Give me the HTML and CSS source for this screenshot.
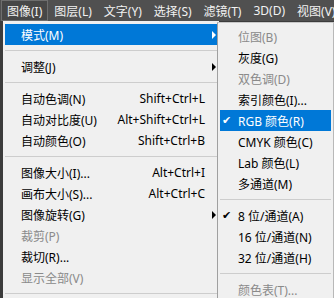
FILE: index.html
```html
<!DOCTYPE html>
<html lang="zh-CN">
<head>
  <meta charset="UTF-8">
  <title>图像菜单</title>
  <link rel="stylesheet" href="styles.css">
</head>
<body>

  <div class="menubar">
    <span class="bar-item active">图像(I)</span>
    <span class="bar-item">图层(L)</span>
    <span class="bar-item">文字(Y)</span>
    <span class="bar-item">选择(S)</span>
    <span class="bar-item">滤镜(T)</span>
    <span class="bar-item">3D(D)</span>
    <span class="bar-item">视图(V)</span>
  </div>

  <div class="stage">
    <ul class="menu main-menu">
      <li class="item hl">模式(M)<span class="arrow"></span></li>
      <li class="sep"></li>
      <li class="item">调整(J)<span class="arrow"></span></li>
      <li class="sep"></li>
      <li class="item">自动色调(N)<span class="key">Shift+Ctrl+L</span></li>
      <li class="item">自动对比度(U)<span class="key">Alt+Shift+Ctrl+L</span></li>
      <li class="item">自动颜色(O)<span class="key">Shift+Ctrl+B</span></li>
      <li class="sep"></li>
      <li class="item">图像大小(I)...<span class="key">Alt+Ctrl+I</span></li>
      <li class="item">画布大小(S)...<span class="key">Alt+Ctrl+C</span></li>
      <li class="item">图像旋转(G)<span class="arrow"></span></li>
      <li class="item off">裁剪(P)</li>
      <li class="item">裁切(R)...</li>
      <li class="item off">显示全部(V)</li>
      <li class="sep"></li>
    </ul>

    <!-- submenu of 模式, drawn over the main menu -->
    <ul class="menu sub-menu">
      <li class="item off"><span class="check"></span>位图(B)</li>
      <li class="item"><span class="check"></span>灰度(G)</li>
      <li class="item off"><span class="check"></span>双色调(D)</li>
      <li class="item"><span class="check"></span>索引颜色(I)...</li>
      <li class="item hl"><span class="check">✔</span>RGB 颜色(R)</li>
      <li class="item"><span class="check"></span>CMYK 颜色(C)</li>
      <li class="item"><span class="check"></span>Lab 颜色(L)</li>
      <li class="item"><span class="check"></span>多通道(M)</li>
      <li class="sep"></li>
      <li class="item"><span class="check">✔</span>8 位/通道(A)</li>
      <li class="item"><span class="check"></span>16 位/通道(N)</li>
      <li class="item"><span class="check"></span>32 位/通道(H)</li>
      <li class="sep"></li>
      <li class="item off"><span class="check"></span>颜色表(T)...</li>
    </ul>
  </div>

</body>
</html>
```

FILE: styles.css
```css
* {
  box-sizing: border-box;
}

body {
  margin: 0;
  width: 334px;
  height: 298px;
  overflow: hidden;
  background-color: #3c3c3c;
  font-family: 'Noto Sans', 'Noto Sans CJK SC', sans-serif;
  font-size: 12px;
  color: #000;
}

.menubar {
  display: flex;
  height: 21px;
  padding-left: 1px;
  background-color: #505050;
}

.bar-item {
  display: flex;
  align-items: center;
  padding: 0 6px;
  color: #f2f2f2;
  white-space: nowrap;
}

.bar-item.active {
  background-color: #474747;
  box-shadow: inset 0 0 0 1px #6e6e6e;
}

.stage {
  position: relative;
  height: 277px;
  overflow: hidden;
}

.menu {
  list-style: none;
  margin: 0;
  background-color: #f0f0f0;
}

.main-menu {
  width: 216px;
  height: 100%;
  margin-left: 3px;
  padding: 3px 2px 0;
  overflow: hidden;
}

.sub-menu {
  position: absolute;
  left: 217px;
  top: 1px;
  width: 117px;
  height: 276px;
  padding: 3px 2px 0;
  border-left: 1px solid #a0a0a0;
  border-right: 1px solid #b8b8b8;
  border-top: 1px solid #c8c8c8;
  overflow: hidden;
}

.item {
  display: flex;
  align-items: center;
  height: 21px;
  padding: 0 12px 0 16px;
  white-space: nowrap;
}

.item.hl {
  background-color: #0078d7;
  color: #fff;
}

.item.off {
  color: #8a8a8a;
}

.key {
  margin-left: auto;
}

.arrow {
  margin-left: auto;
  margin-right: -11px;
  width: 0;
  height: 0;
  border-top: 4px solid transparent;
  border-bottom: 4px solid transparent;
  border-left: 4px solid #000;
}

.hl .arrow {
  border-left-color: #fff;
}

.sep {
  height: 11px;
  display: flex;
  align-items: center;
}

.sep::before {
  content: '';
  flex: 1;
  height: 1px;
  background-color: #cdcdcd;
}

.sub-menu .item {
  padding-left: 2px;
}

.check {
  width: 16px;
  font-family: 'DejaVu Sans', sans-serif;
  font-size: 11px;
}
```
